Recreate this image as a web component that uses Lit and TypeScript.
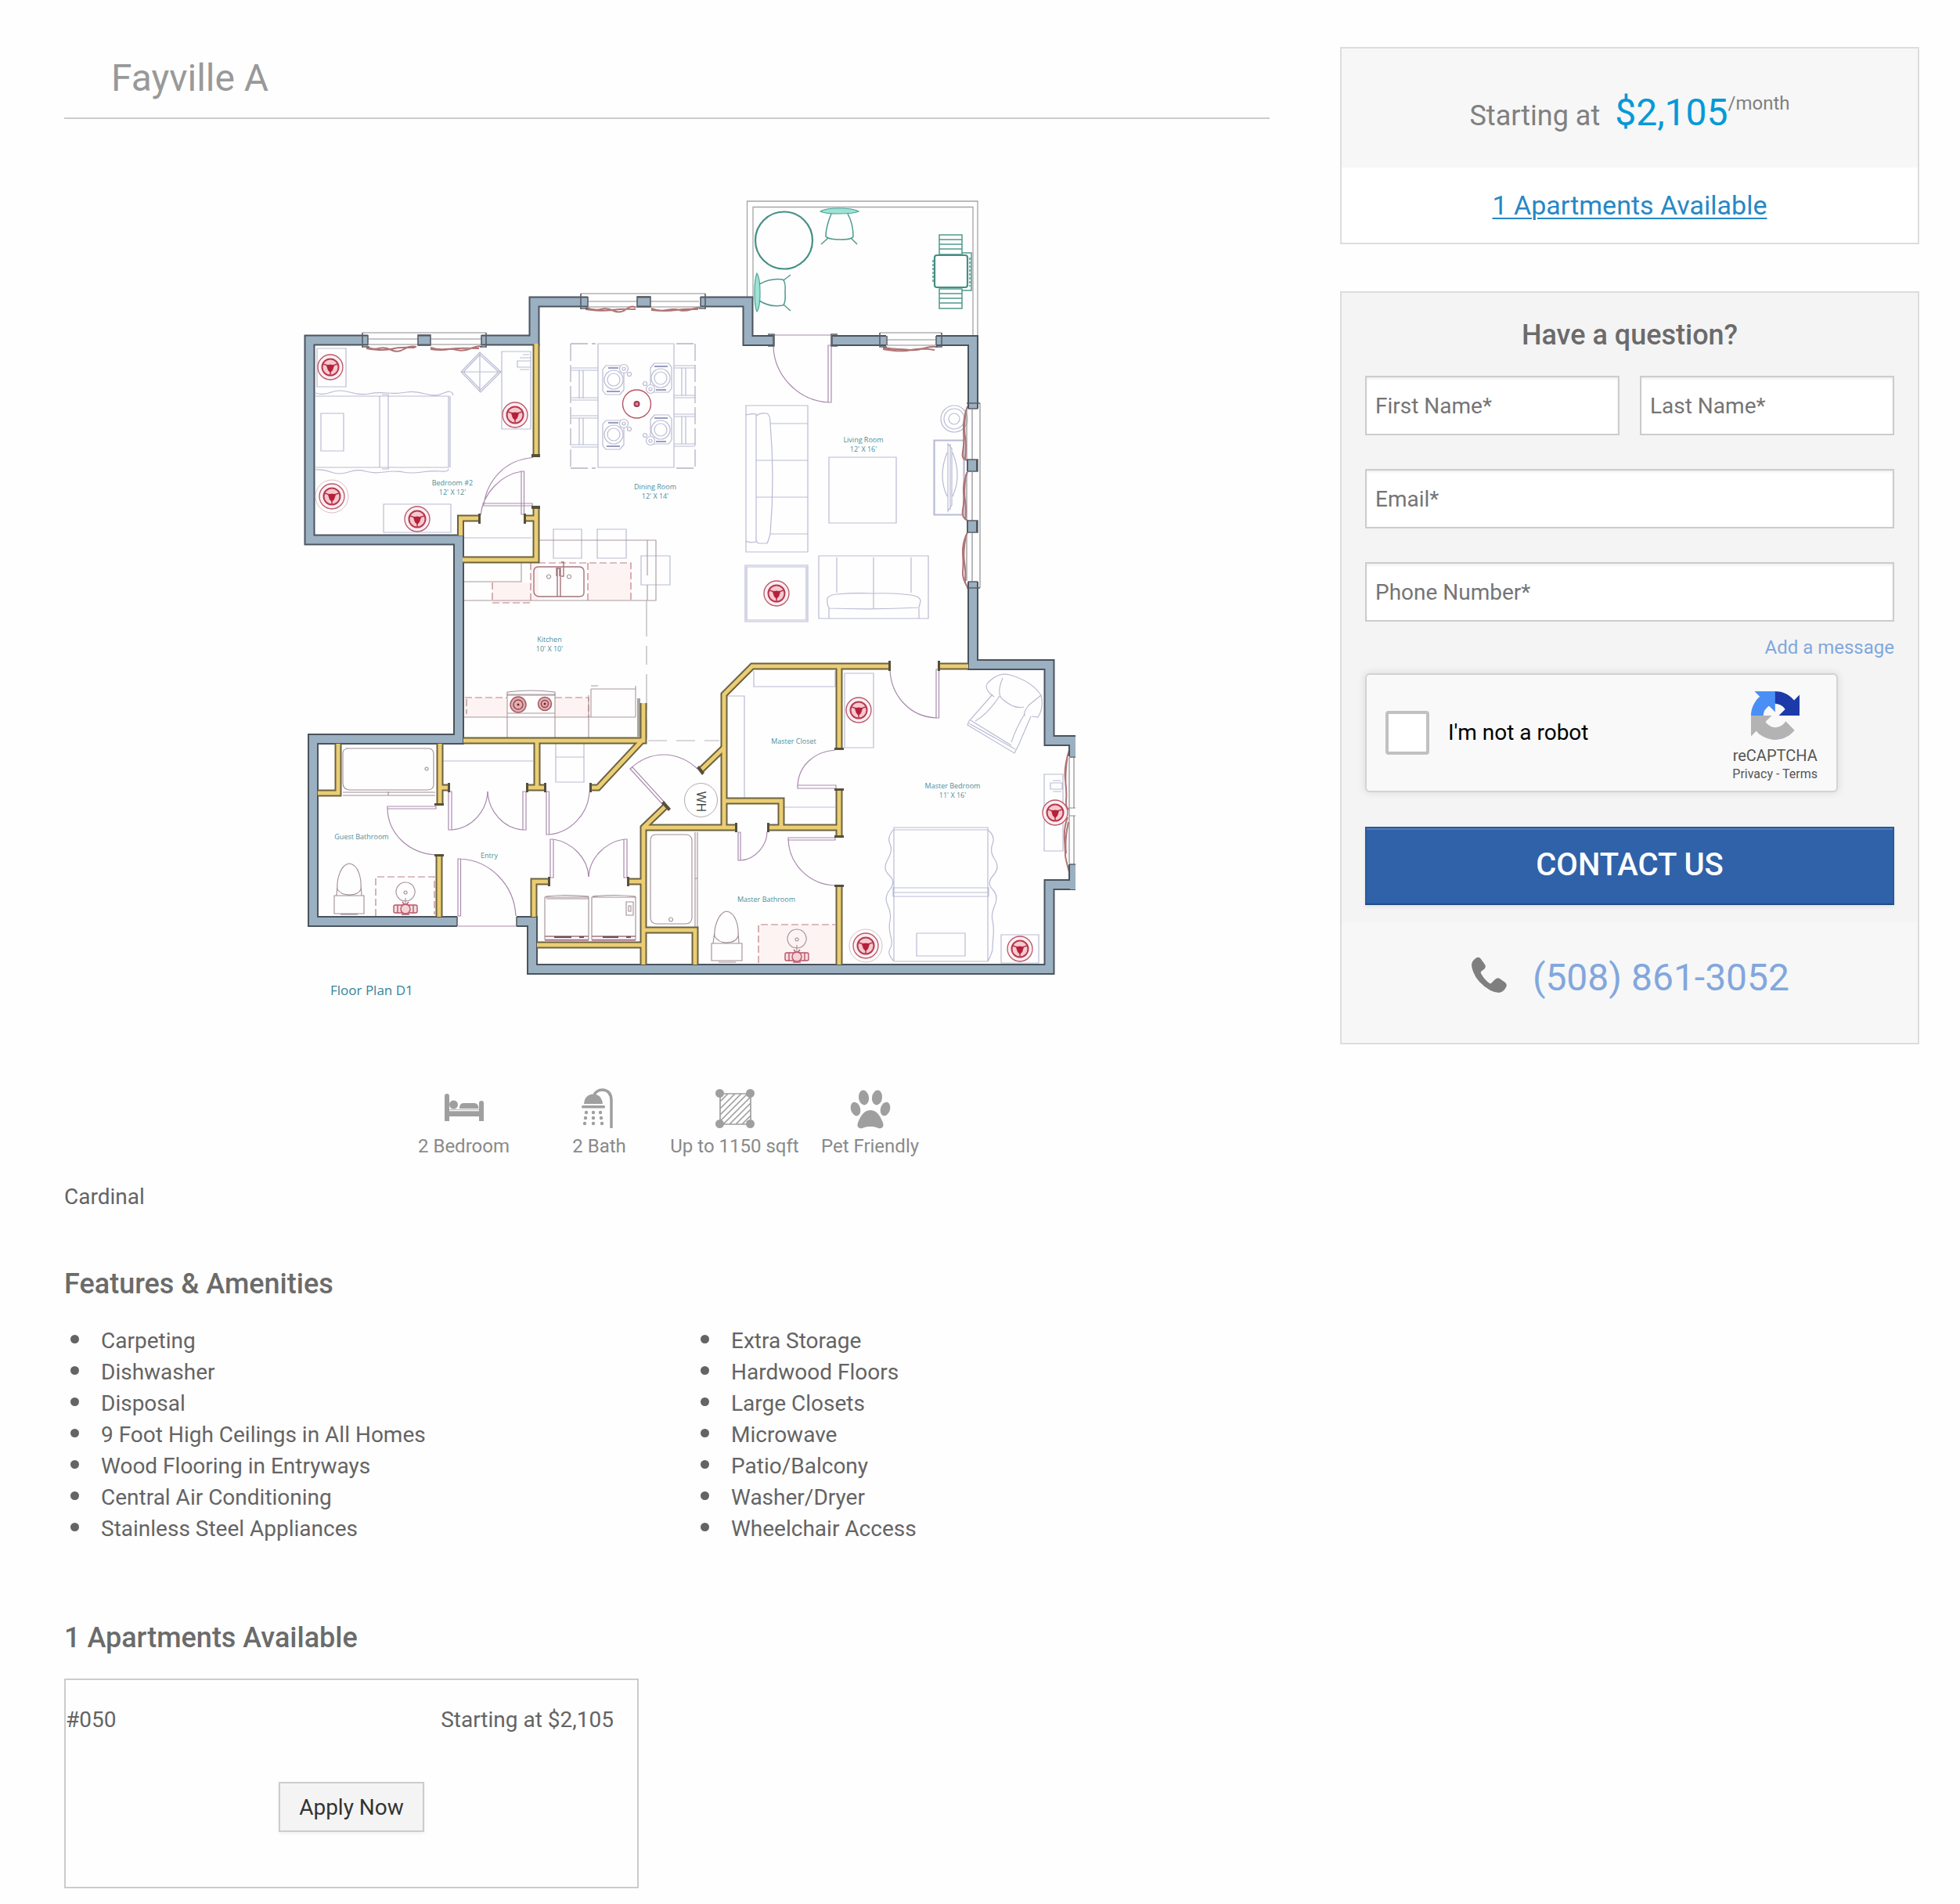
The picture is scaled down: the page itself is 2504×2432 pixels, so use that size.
import { LitElement, html, svg, css } from "lit";
import { customElement, property } from "lit/decorators.js";

type Pt = [number, number];

/* ---------- Floor plan data (plan units) ---------- */

const OUTER_WALLS = [
  "M470 434.5H395.5V689.5H586V944H400V1177H584",
  "M660 1177H680V1238H1340.500V1130H1380",
  "M1380 946H1340.500V849H1243V743",
  "M1243 522V435H1196",
  "M1063 435H1132",
  "M988 435H955.500V385.500H895",
  "M751 385.500H682.500V434.500H615",
  "M534 434.500H550",
  "M814 385.500H831",
  "M1242 587V602",
  "M1242 665V680",
  "M1372 946V966",
  "M1372 1104V1136",
];

const INNER_WALLS = [
  "M685 439V584",
  "M685 647V715H591",
  "M670 662H685",
  "M613 662H588.500V684",
  "M592 946H822V898",
  "M822 944L764 1006H754",
  "M686 946V1006",
  "M672 1006H697",
  "M562 950V1028",
  "M562 1006H573",
  "M432 950V1013H406",
  "M561 1092V1171",
  "M702 1126H682V1171",
  "M802 1126H822",
  "M822 1232V1057L850 1030",
  "M822 1057H941",
  "M686 1207H822",
  "M822 1188H888V1232",
  "M925 1057V887L961 851H1137",
  "M896 983L925 955",
  "M1072 851V957",
  "M1199 851H1237",
  "M925 1023H998V1057",
  "M981 1057H1072",
  "M1072 1008V1069",
  "M1072 1131V1232",
];

/* Short dark caps on wall ends: x, y, width, height */
const CAPS: [number, number, number, number][] = [
  [679, 580, 11, 4], [679, 646, 11, 4], [669, 656, 3, 13], [611, 656, 3, 13],
  [572, 1000, 3, 12], [672, 1000, 3, 12], [695, 1000, 3, 12], [753, 1000, 3, 12],
  [555, 1026, 12, 3], [555, 1091, 12, 3], [700, 1120, 3, 12], [801, 1120, 3, 12],
  [1135, 844, 3, 13], [1198, 844, 3, 13], [1066, 955, 12, 3], [1066, 1007, 12, 3],
  [1066, 1067, 12, 3], [1066, 1130, 12, 3], [939, 1051, 3, 12], [980, 1051, 3, 12],
];

const DOORS = [
  "M681 584.500C645 587 622 614 618 645M617 643H680V646H617zM666 602H669.500V657H666zM667 602C640 606 617 630 614 658",
  "M988 428H1063M1058 441H1062V514H1058zM988 442C989 480 1020 512 1059 514",
  "M1196 855H1199.500V917H1196zM1137 855C1138 888 1162 916 1197 917",
  "M1019 1003H1068V1007H1019zM1067 958C1040 960 1020 978 1019 1004",
  "M1007 1070H1067V1073H1007zM1007 1072C1008 1104 1034 1130 1067 1131",
  "M943 1063H946V1099H943zM946 1099C965 1098 980 1080 980 1062",
  "M573 1011H577V1060H573zM577 1060C603 1058 622 1036 623 1011",
  "M668 1011H672V1060H668zM668 1060C643 1058 624 1036 623 1011",
  "M698 1011H701.500V1066H698zM701 1066C728 1064 752 1040 753 1011",
  "M495 1030H557V1033H495zM495 1033C496 1065 522 1090 557 1092",
  "M585 1097H588.500V1170H585zM588 1097C626 1099 657 1130 659 1170M585 1183H660",
  "M703 1072H707V1121H703zM707 1072C731 1076 751 1096 752 1120",
  "M797 1072H801V1121H797zM797 1072C773 1076 753 1096 752 1120",
  "M805 982L808 980L850 1026L847 1028zM805 982C832 957 866 959 891 982",
];

const WINDOWS = [
  "M463 425H621M471 433H534M551 433H615M471 440H534M551 440H615",
  "M742 375H901M751 385H814M831 385H893M751 392H814M831 392H893",
  "M1124 425H1203M1133 434H1195M1133 441H1195",
  "M1252 515V751M1242 523V587M1242 603V665M1242 681V742M1235 523V587M1235 603V665M1235 681V742",
  "M1366 968V1103M1372 968V1032M1372 1042V1103M1366 1032H1374M1366 1042H1374",
];

const BRACKETS = [
  "M463 425V444M621 425V444M463 443H472M613 443H621",
  "M742 375V395M901 375V395M742 394H752M893 394H901",
  "M1124 425V443H1133M1203 425V443H1195",
  "M1235 515H1252M1235 751H1252",
  "M981 427H989V442H981M1070 427H1062V442H1070",
];

const CURTAINS = [
  "M468 443q8 4 16 2t16 2t16 -1t16 -3M468 445q12 2 20 2t16 -2t26 -1M550 444q10 3 18 2t16 1t18 -2t14 -2M550 446q14 2 24 0t38 -1",
  "M748 393q12 4 20 2t16 2t16 -2t12 -2M748 395q20 3 34 1t30 -1M832 394q10 4 20 2t16 0t16 -1t10 -2M832 396q18 2 32 0t28 -1",
  "M1128 444q14 2 20 2t14 1t18 -2t18 -2M1128 446q24 4 36 1t30 0",
  "M1236 519q-6 16 -5 32t-1 26t6 11M1234 524q-3 24 -1 34t0 28M1236 603q-6 14 -5 26t-1 22t6 14M1234 606q-3 22 -1 34t0 24M1236 680q-7 14 -6 28t0 22t6 20M1234 684q-4 22 -2 34t1 26",
  "M1366 958q-7 22 -5 38t1 26t4 12M1364 964q-4 26 -2 44M1364 1044q-5 12 -4 28t1 20t5 22M1365 1050q-5 22 -3 40",
];

const FURNITURE = [
  // bedroom 2
  "M405 445H442V494H405zM403 506H573V597H403M485 506V597M488 504H496V599H488M575 506V597M410 528H439V576H410zM403 502q10 3 20 -1t24 0t24 2t24 -1t24 -1t24 2t24 -1t12 3M403 600q10 -1 20 3t22 0t22 -1t24 1t24 0t24 0t24 -1t10 -3",
  "M613 450L589 475L614 501L640 475zM613 453L592 475L614 498L637 475zM613 450V501M589 475H640M641 449H678V548H641zM661 461h17v8h-17zM668 453h8M664 457h14M664 472h12",
  "M490 644H576V680H490z",
  // dining room
  "M764 439H861V597H764zM730 470H764M730 473H764M740 473V509M745 473V509M730 508H764M730 511H764M730 531H764M730 534H764M740 534V568M745 534V568M730 568H764M730 571H764",
  "M861 467H888M861 470H888M871 470V505M876 470V505M861 505H888M861 508H888M861 529H888M861 532H888M871 532V567M876 532V567M861 567H888M861 570H888",
  // sofas and tables
  "M953 518H1032V705H953zM953 530Q962 528 966 529V692Q958 694 953 691M966 532Q968 527 980 528Q984 530 984 541Q990 610 984 682Q982 690 980 694H969Q965 692 966 685M984 541H1032M986 588H1032M986 635H1032M984 682H1032M966 588H986M966 635H986",
  "M1059 584H1145V668H1059z",
  "M1046 710H1186V790H1046zM1069 712V757M1116 712V777M1164 712V757M1069 759Q1092 757 1116 758Q1140 757 1164 760Q1176 762 1176 768L1174 776Q1120 779 1060 777Q1056 774 1057 764Q1060 760 1069 759M1059 777V790M1174 777V790",
  "M1193 562H1232V658H1193zM1194 563H1231V657H1194zM1211 567l5 6v72l-5 8zM1214 567v84M1210 578q-12 30 0 56M1217 578q12 30 0 56",
  "M1219 518a17 17 0 1 0 0 34a17 17 0 1 0 0 -34M1219 522a13 13 0 1 0 0 26a13 13 0 1 0 0 -26M1219 528a7 7 0 1 0 0 14a7 7 0 1 0 0 -14",
  // counter stools
  "M707 676H743V713H707zM763 676H800V713H763zM819 710H856V747H819z",
  // closets and shelves
  "M963 857V877H1067V857M928 889H951V1019M1002 1031H1067M1079 860H1116V955H1079zM593 687H679M566 972H681M710 950V999H746V950M710 967H746",
  // armchair
  "M1262 872Q1276 858 1290 862Q1318 870 1330 888Q1334 904 1326 916L1318 915M1262 872Q1256 880 1270 890M1281 866Q1272 888 1282 894Q1296 906 1308 903M1330 888L1314 901Q1306 912 1310 914M1268 887L1238 921L1236 926L1296 962L1302 950L1317 915M1277 889Q1262 912 1246 921M1309 912Q1298 930 1292 948M1240 920L1292 952M1238 924L1297 957",
  // master bed
  "M1142 1057H1262V1060H1142zM1142 1060V1228M1262 1060V1228M1141 1134H1263V1145H1141zM1141 1140H1263M1143 1228H1262M1171 1192H1233V1221H1171zM1141 1060q-8 10 -4 18t-3 20t2 20t1 18t-3 20t3 20t1 20t-1 16t5 16M1262 1060q10 8 6 18t3 20t-2 20t-1 18t3 20t-3 20t1 20t-1 16t-6 16",
  "M1334 989H1358V1087H1334zM1342 1000h15v8h-15zM1345 997h10M1345 1011h11M1279 1194H1327V1230H1279z",
  "M952 722H1032V794H952zM954 724H1030V792H954z",
];

const DASHED_OUTLINE =
  "M729 439V597M888 439V597M729 439H761M864 439H888M729 598H761M864 598H888";

const FIXTURES = [
  "M442 956H548Q554 957 554 963V1003Q553 1009 546 1009H446Q438 1008 438 1000V962Q438 956 446 956M545 980a2 2 0 1 0 .1 0M438 1012H556M438 1016H556M496 1011V1016",
  "M838 1066H877Q884 1067 884 1074V1173Q883 1180 876 1180H838Q831 1179 831 1172V1074Q831 1066 838 1066M857 1172a2.500 2.500 0 1 0 .1 0M888 1063V1184M891 1063V1184M888 1122H891",
  "M446 1103C434 1105 430 1125 431 1136Q436 1143 446 1143Q458 1143 461 1136C462 1122 458 1104 446 1103M427 1144H465V1167H427zM431 1130L430 1144M461 1130L462 1144M435 1168H457",
  "M928 1164C917 1166 912 1186 913 1196Q918 1204 928 1204Q940 1204 943 1196C944 1184 940 1165 928 1164M909 1205H948V1227H909zM913 1190L911 1205M943 1190L944 1205M918 1229H940",
  "M518 1127a12 12 0 1 0 .1 0M518 1138a2 2 0 1 0 .1 0M518 1147V1156",
  "M1018 1187a12 12 0 1 0 .1 0M1018 1198a2 2 0 1 0 .1 0M1018 1207V1216",
  "M696 1146H752V1200H696zM698 1148H752V1196M756 1146H812V1200H756zM697 1145Q720 1142 752 1145M757 1145Q786 1142 812 1145M800 1152H809V1169H800zM803 1157h3v7h-3z",
  "M701 734a2.500 2.500 0 1 0 .1 0M727 734a2.500 2.500 0 1 0 .1 0M648 884Q678 880 709 884V888H648z",
];

const COUNTERS = [
  "M688 690H838V767H592M827 690V735M827 747V767M592 743H666V719M648 896V942M709 888V942M752 888V942M755 880V916M812 876V916M755 880H812M755 876H764M592 916H812M648 887H709V911H648z",
];

const LAMPS: { at: Pt; wide?: boolean }[] = [
  { at: [422, 469] }, { at: [658, 530] }, { at: [424, 634], wide: true }, { at: [533, 663] },
  { at: [992, 758] }, { at: [1097, 907] }, { at: [1348, 1038] },
  { at: [1106, 1208], wide: true }, { at: [1303, 1212] },
];

const PLACE_SETTINGS: { at: Pt; flip: number }[] = [
  { at: [784, 485], flip: 1 }, { at: [844, 483], flip: -1 },
  { at: [784, 555], flip: 1 }, { at: [844, 549], flip: -1 },
];

const ROOMS: { at: Pt; lines: string[] }[] = [
  { at: [578, 620], lines: ["Bedroom #2", "12' X 12'"] },
  { at: [837, 625], lines: ["Dining Room", "12' X 14'"] },
  { at: [1103, 565], lines: ["Living Room", "12' X 16'"] },
  { at: [702, 820], lines: ["Kitchen", "10' X 10'"] },
  { at: [1014, 950], lines: ["Master Closet"] },
  { at: [1217, 1007], lines: ["Master Bedroom", "11' X 16'"] },
  { at: [462, 1072], lines: ["Guest Bathroom"] },
  { at: [625, 1096], lines: ["Entry"] },
  { at: [979, 1152], lines: ["Master Bathroom"] },
];

@customElement("floor-plan")
export class FloorPlan extends LitElement {
  static styles = css`
    :host { display: block; }
    .plan { display: block; width: 100%; height: auto; fill: none; }
    .wall-edge { stroke: #4a545e; stroke-width: 14; }
    .wall-fill { stroke: #9bb0c1; stroke-width: 10; }
    .inner-edge { stroke: #6b6340; stroke-width: 9; }
    .inner-fill { stroke: #ebcd74; stroke-width: 5; }
    .cap { fill: #55503c; }
    .door { stroke: #a98aae; stroke-width: 1.2; }
    .window { stroke: #8c8c90; stroke-width: 1.2; }
    .bracket { stroke: #5a5e64; stroke-width: 1.6; }
    .curtain { stroke: #b07476; stroke-width: 2; }
    .furniture { stroke: #b9bbd3; stroke-width: 1.2; }
    .cutlery { stroke: #989dbf; stroke-width: 2; }
    .dashed { stroke: #b3b3c4; stroke-width: 1.3; stroke-dasharray: 22 5; }
    .fixture { stroke: #a08c96; stroke-width: 1.1; }
    .counter { stroke: #a8979c; stroke-width: 1.1; }
    .shade { fill: #fef3f3; }
    .red-dash { stroke: #bb7f86; stroke-width: 1.2; stroke-dasharray: 9 4; }
    .sink { stroke: #a5737b; stroke-width: 1.4; }
    .red { stroke: #b8566a; stroke-width: 1.4; }
    .patio { stroke: #4f9a8e; stroke-width: 1.5; }
    .patio-table { stroke: #458f84; stroke-width: 2.2; }
    .patio-seat { stroke: #4aa596; stroke-width: 1.2; fill: #9fe3d6; }
    .railing { stroke: #a9a4a6; stroke-width: 1.3; }
    .room { fill: #4d8f9c; font: 9px "Open Sans", "Noto Sans", sans-serif; text-anchor: middle; }
    .caption { fill: #37849a; font: 500 17px "Open Sans", "Noto Sans", sans-serif; }
    .heater { fill: #444; font: 16px "Open Sans", sans-serif; text-anchor: middle; }
  `;

  private lamp({ at: [x, y], wide }: { at: Pt; wide?: boolean }) {
    return svg`
      <g transform="translate(${x} ${y})">
        ${wide ? svg`<circle r="21" stroke="#cfaeb6" stroke-width="0.8"></circle>` : ""}
        <circle r="16" fill="#fdeef0" stroke="#b9566a" stroke-width="1.3"></circle>
        <circle r="10.500" fill="#f6c9cf" stroke="#b53a50" stroke-width="2"></circle>
        <path d="M-9 -4Q0 0 9 -4M0 0V10" stroke="#b5394f" stroke-width="1.5"></path>
        <path d="M-5 -2Q0 -5 5 -2L3 4L0 7L-3 4z" fill="#b5213a"></path>
      </g>`;
  }

  private setting({ at: [x, y], flip }: { at: Pt; flip: number }) {
    return svg`
      <g transform="translate(${x} ${y}) scale(${flip})" class="furniture">
        <path d="M-10 -18H9L13 -13V13L8 19H-10L-14 14V-13z"></path>
        <path class="cutlery" d="M-9 15H8M-7 -15H6"></path>
        <circle r="12" fill="#fff"></circle>
        <circle r="8"></circle>
        <circle cx="13" cy="-14" r="5.500" fill="#fff"></circle>
        <circle cx="13" cy="-14" r="2"></circle>
        <circle cx="20" cy="-7" r="2.500"></circle>
      </g>`;
  }

  private burner(x: number, y: number, r: number) {
    return svg`
      <circle cx=${x} cy=${y} r=${r} fill="#dfb0b3" stroke="#a8585f" stroke-width="1.500"></circle>
      <circle cx=${x} cy=${y} r=${r - 4} stroke="#9c444d" stroke-width="1.500"></circle>
      <circle cx=${x} cy=${y} r="1.500" fill="#7a1f2a"></circle>`;
  }

  render() {
    const paths = (list: string[], cls: string) =>
      list.map((d) => svg`<path class=${cls} d=${d}></path>`);
    return html`
      <svg class="plan" viewBox="330 190 1044 1140" role="img" aria-label="Floor Plan D1">
        <path class="shade" d="M629 744H678V770H629zM678 719H688V767H678zM751 719H806V767H751zM594 891H648V916H594zM709 891H752V916H709zM969 1181H1067V1230H969z"></path>

        <path class="railing" d="M954.500 379V257H1249V429M962 379V264.500H1243V429"></path>
        <circle class="patio-table" cx="1001.500" cy="307" r="36.500"></circle>
        <path class="patio-seat" d="M1048 270q6 -4 24 -4t25 4q-6 3 -25 3t-24 -3z"></path>
        <path class="patio" d="M1062 273Q1055 290 1055 302Q1058 306 1074 306Q1089 306 1090 302Q1090 286 1083 273M1058 304L1049 312M1087 304L1095 312"></path>
        <path class="patio-seat" d="M967 349q4 6 4 25t-4 24q-3 -6 -3 -24t3 -25z"></path>
        <path class="patio" d="M970 363Q985 355 1000 357Q1004 360 1003 373Q1004 388 1000 390Q984 393 970 384M1001 358L1010 351M1001 389L1010 397"></path>
        <path class="patio" d="M1200 300H1229V325H1200zM1200 306H1229M1200 312H1229M1200 318H1229M1200 369H1229V394H1200zM1200 375H1229M1200 381H1229M1200 387H1229M1229 323H1241V371H1229"></path>
        <rect class="patio-table" x="1194" y="326" width="42" height="41" rx="3" fill="#fff"></rect>
        <path class="patio" d="M1192 332V362M1239 329V366" stroke-dasharray="3 2"></path>

        ${paths(FURNITURE, "furniture")}
        <path class="dashed" d=${DASHED_OUTLINE}></path>
        ${PLACE_SETTINGS.map((s) => this.setting(s))}
        <circle class="red" cx="813.500" cy="516" r="18"></circle>
        <circle cx="813.500" cy="516" r="3" fill="#e08a94" stroke="#a3384c" stroke-width="2"></circle>

        ${paths(COUNTERS, "counter")}
        ${paths(FIXTURES, "fixture")}
        <path class="red-dash" d="M629 744V770H678V719M688 719H806V767M751 719V767M594 891H648M709 891H752V916M596 893V912M480 1170V1120H555V1168M969 1230V1181H1067"></path>
        <path class="sink" d="M688 724H741Q746 725 746 730V757Q746 762 740 762H688Q682 761 682 755V730Q682 724 688 724M712 725V762M716 725V762M711 736v-10h4v10M717 718h3v18h-3"></path>
        ${this.burner(662, 900, 10)} ${this.burner(696, 899, 8.5)}
        <path class="sink" d="M696 1196H752M756 1196H812M696 1201H752M756 1201H812"></path>
        <path d="M708 1197H730M740 1197H746M770 1197H790M800 1197H806" stroke="#6c4a52" stroke-width="2"></path>
        <g class="red">
          <rect x="503" y="1156" width="30" height="10" rx="2" fill="#f6dcdf"></rect>
          <circle cx="518" cy="1161" r="6" fill="#f6d3d7"></circle>
          <path d="M508 1156v10M528 1156v10M513 1168h10M514 1152l3 4M522 1152l-3 4"></path>
          <rect x="1003" y="1217" width="30" height="10" rx="2" fill="#f6dcdf"></rect>
          <circle cx="1018" cy="1222" r="6" fill="#f6d3d7"></circle>
          <path d="M1008 1217v10M1028 1217v10M1013 1229h10M1014 1213l3 4M1022 1213l-3 4"></path>
        </g>
        <path d="M826 767V944" stroke="#b5b2b6" stroke-width="1.2" stroke-dasharray="46 12 24 12"></path>
        <path d="M828 946H919" stroke="#b5b2b6" stroke-width="1.2" stroke-dasharray="24 12"></path>
        <path d="M816 892V941" stroke="#a9a5a0" stroke-width="4"></path>

        ${paths(WINDOWS, "window")}
        ${paths(CURTAINS, "curtain")}
        ${paths(DOORS, "door")}
        ${paths(OUTER_WALLS, "wall-edge")}
        ${paths(INNER_WALLS, "inner-edge")}
        ${paths(OUTER_WALLS, "wall-fill")}
        ${paths(INNER_WALLS, "inner-fill")}
        ${paths(BRACKETS, "bracket")}
        ${CAPS.map(([x, y, w, h]) => svg`<rect class="cap" x=${x} y=${y} width=${w} height=${h}></rect>`)}
        <path class="cap" d="M845 1026l3 -3l9 10l-3 3zM890 981l3 -3l7 9l-3 3z"></path>
        <path class="bracket" d="M470 428V441M615 428V441M534 428V441H550V428zM751 379V392M895 379V392M814 379V392H831V379zM1133 429V441M1196 429V441M1063 429V441M988 429V441M1237 522H1249M1236 587H1249V602H1236zM1236 665H1249V680H1236zM1237 743H1249M584 1171V1183M660 1171V1183M1366 967H1374M1366 1104H1374"></path>

        ${LAMPS.map((l) => this.lamp(l))}

        <ellipse cx="895.500" cy="1022" rx="21" ry="21.500" stroke="#b5a6ad" fill="#fff"></ellipse>
        <text class="heater" transform="translate(890 1024) rotate(90)">WH</text>
        ${ROOMS.map(({ at: [x, y], lines }) =>
          lines.map((t, i) => svg`<text class="room" x=${x} y=${y + i * 12}>${t}</text>`))}
        <text class="caption" x="422" y="1271">Floor Plan D1</text>
      </svg>`;
  }
}

/* ---------- Feature icons ---------- */

const ICONS = {
  bed: svg`
    <path d="M1 10a3 3 0 0 1 6 0V27H45V19a3 3 0 0 1 6 0V42H45V36H7V42H1z"></path>
    <circle cx="12.500" cy="21" r="5.500"></circle>
    <path d="M20 26q0 -7 5 -7H39q5 0 5.500 7z"></path>
    <path d="M7 28.500H45" stroke="#fefefe" stroke-width="1.500"></path>`,
  shower: svg`
    <path d="M19 8Q23 2 30 2Q41 3 41 16V51" fill="none" stroke="#9f9f9f" stroke-width="3.500"></path>
    <path d="M6 20Q7 8 18 7.500Q29 8 30 20z"></path>
    <rect x="3" y="22" width="30" height="3.500" rx="1.500"></rect>
    <circle cx="9" cy="31" r="2.200"></circle><circle cx="18" cy="31" r="2.200"></circle><circle cx="27" cy="31" r="2.200"></circle>
    <circle cx="8" cy="38" r="2.200"></circle><circle cx="18" cy="38" r="2.200"></circle><circle cx="28" cy="38" r="2.200"></circle>
    <circle cx="7" cy="45" r="2.200"></circle><circle cx="18" cy="45" r="2.200"></circle><circle cx="29" cy="45" r="2.200"></circle>`,
  area: svg`
    <path d="M7 7H46V46H7zM7 17L17 7M7 26L26 7M7 34L34 7M7 42L42 7M11 46L46 11M19 46L46 19M27 46L46 27M35 46L46 35" fill="none" stroke="#9f9f9f" stroke-width="1.700"></path>
    <circle cx="6.500" cy="6.500" r="5.500"></circle><circle cx="45.500" cy="6.500" r="5.500"></circle>
    <circle cx="6.500" cy="45.500" r="5.500"></circle><circle cx="45.500" cy="45.500" r="5.500"></circle>`,
  paw: svg`
    <ellipse cx="17.500" cy="12" rx="6.500" ry="9.500" transform="rotate(-8 17.500 12)"></ellipse>
    <ellipse cx="34.500" cy="12" rx="6.500" ry="9.500" transform="rotate(8 34.500 12)"></ellipse>
    <ellipse cx="7" cy="26.500" rx="6" ry="9" transform="rotate(-16 7 26.500)"></ellipse>
    <ellipse cx="45" cy="26.500" rx="6" ry="9" transform="rotate(16 45 26.500)"></ellipse>
    <path d="M26 28C35 28 39 37 42 44C44 50 40 52 36 51C31 49 29 49 26 49C23 49 21 49 16 51C12 52 8 50 10 44C13 37 17 28 26 28z"></path>`,
};

const FACTS: { icon: keyof typeof ICONS; label: string }[] = [
  { icon: "bed", label: "2 Bedroom" },
  { icon: "shower", label: "2 Bath" },
  { icon: "area", label: "Up to 1150 sqft" },
  { icon: "paw", label: "Pet Friendly" },
];

const AMENITIES = [
  ["Carpeting", "Dishwasher", "Disposal", "9 Foot High Ceilings in All Homes",
    "Wood Flooring in Entryways", "Central Air Conditioning", "Stainless Steel Appliances"],
  ["Extra Storage", "Hardwood Floors", "Large Closets", "Microwave",
    "Patio/Balcony", "Washer/Dryer", "Wheelchair Access"],
];

/* ---------- Contact form ---------- */

@customElement("contact-card")
export class ContactCard extends LitElement {
  @property() phone = "";

  static styles = css`
    :host { display: block; border: 2px solid #ddd; background: #f7f7f7; }
    * { box-sizing: border-box; }
    .form { background: #f4f4f4; padding: 30px 30px 22px; }
    .title { margin: 0 0 28px; font-size: 36px; line-height: 48px; font-weight: 500; color: #6b6b6b; text-align: center; }
    .fields { display: grid; grid-template-columns: 1fr 1fr; column-gap: 26px; row-gap: 43px; }
    .wide { grid-column: 1 / -1; }
    .input {
      width: 100%; min-width: 0; height: 76px; padding: 0 11px; border: 2px solid #ccc; border-radius: 0;
      background: #fff; box-shadow: inset 0 2px 3px rgba(0, 0, 0, 0.07);
      font: 28px Roboto, sans-serif; color: #444; outline: none;
    }
    .input::placeholder { color: #757575; opacity: 1; }
    .more { display: flex; justify-content: flex-end; margin: 16px 0; font-size: 24px; line-height: 34px; }
    .link { color: #82a7dd; text-decoration: none; }
    .captcha {
      display: flex; justify-content: space-between; align-items: center; max-width: 604px; height: 152px;
      padding: 0 24px; border: 2px solid #d3d3d3; border-radius: 6px; background: #f9f9f9;
      box-shadow: 0 0 8px 2px rgba(0, 0, 0, 0.08);
    }
    .robot { display: flex; align-items: center; gap: 24px; font-size: 28px; line-height: 56px; color: #000; }
    .box { appearance: none; width: 56px; height: 56px; margin: 0; border: 4px solid #c1c1c1; border-radius: 4px; background: #fff; }
    .brand { display: flex; flex-direction: column; align-items: center; padding-top: 12px; color: #555; font-size: 20px; line-height: 24px; }
    .mark { width: 62px; height: 62px; margin-bottom: 8px; }
    .legal { font-size: 16px; line-height: 24px; }
    .legal a { color: inherit; text-decoration: none; }
    .submit {
      display: block; width: 100%; height: 100px; margin-top: 44px; padding: 0 0 3px; border: 2px solid #2a599c; border-bottom-color: #1f4a86;
      background: #3062a9; color: #fff; font: 500 40px Roboto, sans-serif;
      box-shadow: inset 0 2px 0 #4f7dbb, 0 2px 4px rgba(0, 0, 0, 0.08);
    }
    .call { display: flex; justify-content: center; align-items: flex-start; gap: 32px; padding: 43px 0 55px; font-size: 48px; line-height: 56px; }
    .handset { width: 48px; height: 48px; fill: #7f7f7f; }
  `;

  render() {
    return html`
      <form class="form" @submit=${(e: Event) => e.preventDefault()}>
        <h2 class="title">Have a question?</h2>
        <div class="fields">
          <input class="input" name="first" placeholder="First Name*" aria-label="First Name" />
          <input class="input" name="last" placeholder="Last Name*" aria-label="Last Name" />
          <input class="input wide" type="email" name="email" placeholder="Email*" aria-label="Email" />
          <input class="input wide" type="tel" name="phone" placeholder="Phone Number*" aria-label="Phone Number" />
        </div>
        <div class="more"><a class="link" href="#message">Add a message</a></div>
        <div class="captcha">
          <label class="robot"><input class="box" type="checkbox" />I'm not a robot</label>
          <div class="brand">
            <svg class="mark" viewBox="0 0 64 64" aria-hidden="true">
              <path fill="#1c3aa9" d="M64 31.955l-.033-1.37V4.687l-7.16 7.160C50.948 4.674 42.033.093 32.050.093c-10.400 0-19.622 4.960-25.458 12.640l11.736 11.860a15.550 15.550 0 0 1 4.754-5.334c2.050-1.600 4.952-2.906 8.968-2.906.485 0 .860.057 1.135.163 4.976.393 9.288 3.140 11.828 7.124l-8.307 8.307L64 31.953"></path>
              <path fill="#4a8ff5" d="M31.862.094l-1.370.033H4.594l7.160 7.160C4.580 13.147 0 22.060 0 32.046c0 10.400 4.960 19.622 12.640 25.458L24.500 45.768a15.550 15.550 0 0 1-5.334-4.754c-1.600-2.050-2.906-4.952-2.906-8.968 0-.485.057-.860.163-1.135.393-4.976 3.140-9.288 7.124-11.828l8.307 8.307L31.860.095"></path>
              <path fill="#b3b3b3" d="M.001 32.045l.033 1.370v25.898l7.160-7.160c5.860 7.173 14.774 11.754 24.760 11.754 10.400 0 19.622-4.960 25.458-12.640l-11.736-11.860a15.550 15.550 0 0 1-4.754 5.334c-2.050 1.600-4.952 2.906-8.968 2.906-.485 0-.860-.057-1.135-.163-4.976-.393-9.288-3.140-11.828-7.124l8.307-8.307c-10.522.040-22.400.066-27.295-.005"></path>
            </svg>
            <span>reCAPTCHA</span>
            <span class="legal"><a href="#privacy">Privacy</a> - <a href="#terms">Terms</a></span>
          </div>
        </div>
        <button class="submit" type="submit">CONTACT US</button>
      </form>
      <div class="call">
        <svg class="handset" viewBox="0 0 48 48" aria-hidden="true">
          <path d="M2 11Q3 5 9 2Q12 1 14 4L19 11Q21 14 18 17L14 20Q13 22 15 24Q19 31 25 35Q27 36 28 34L32 30Q35 27 38 29L45 34Q48 37 46 40Q43 46 37 47Q32 47 26 44Q9 34 4 20Q2 15 2 11z"></path>
        </svg>
        <a class="link" href="tel:5088613052">${this.phone}</a>
      </div>`;
  }
}

/* ---------- Page ---------- */

@customElement("app-root")
export class AppRoot extends LitElement {
  static styles = css`
    :host { display: block; min-height: 100vh; background: #fefefe; color: #646464; font: 28px/40px Roboto, sans-serif; box-sizing: border-box; }
    * { box-sizing: border-box; }
    .page { display: grid; grid-template-columns: minmax(0, 1540fr) minmax(0, 740fr); column-gap: 90px; align-items: start; padding: 60px 52px 20px 82px; }
    .name { margin: 0; padding: 10px 60px 20px; border-bottom: 2px solid #ccc; font-size: 48px; line-height: 60px; font-weight: 400; color: #999; }
    .figure { width: 100%; max-width: 1044px; margin: 38px auto 60px; }
    .facts { display: flex; justify-content: center; margin: 0; padding: 0; list-style: none; font-size: 24px; line-height: 32px; color: #8a8a8a; }
    .fact { display: flex; flex-direction: column; align-items: center; gap: 6px; width: 173px; white-space: nowrap; }
    .glyph { width: 52px; height: 52px; fill: #9f9f9f; }
    .summary { margin: 29px 0 67px; }
    .heading { margin: 0 0 28px; font-size: 36px; line-height: 48px; font-weight: 500; color: #6b6b6b; }
    .amenities { display: grid; grid-template-columns: 805fr 735fr; margin-bottom: 95px; padding-top: 1px; }
    .list { margin: 0; padding: 0; list-style: none; }
    .item { display: flex; align-items: center; gap: 28px; padding-left: 8px; }
    .item::before { content: ""; width: 11px; height: 11px; margin-bottom: 6px; border-radius: 50%; background: #646464; }
    .unit { width: 48%; max-width: 734px; padding: 31px 0 70px; border: 2px solid #ccc; }
    .unit-row { display: flex; justify-content: space-between; margin-bottom: 59px; padding-right: 30px; }
    .apply { display: block; height: 64px; margin: 0 auto; padding: 0 24px; border: 2px solid #ccc; background: #f4f4f4; color: #333; font: 28px Roboto, sans-serif; box-shadow: 0 2px 4px rgba(0, 0, 0, 0.06); }
    .side { display: grid; row-gap: 60px; }
    .price-card { border: 2px solid #ddd; background: #fff; }
    .price { display: flex; justify-content: center; align-items: baseline; height: 152px; padding-top: 52px; background: #f7f7f7; font-size: 36px; line-height: 60px; color: #808080; }
    .amount { margin-left: 19px; font-size: 48px; color: #0599d8; }
    .per { align-self: flex-start; font-size: 24px; line-height: 36px; }
    .available { display: flex; justify-content: center; padding: 24px 0; font-size: 34px; line-height: 48px; }
    .available-link { color: #2787c5; text-decoration: underline; text-decoration-thickness: 2px; text-underline-offset: 4px; }
  `;

  render() {
    return html`
      <div class="page">
        <main>
          <h1 class="name">Fayville A</h1>
          <floor-plan class="figure"></floor-plan>
          <ul class="facts">
            ${FACTS.map((f) => html`
              <li class="fact">
                <svg class="glyph" viewBox="0 0 52 52" aria-hidden="true">${ICONS[f.icon]}</svg>
                <span>${f.label}</span>
              </li>`)}
          </ul>
          <p class="summary">Cardinal</p>
          <h2 class="heading">Features &amp; Amenities</h2>
          <div class="amenities">
            ${AMENITIES.map((col) => html`
              <ul class="list">${col.map((a) => html`<li class="item">${a}</li>`)}</ul>`)}
          </div>
          <h2 class="heading" id="units">1 Apartments Available</h2>
          <section class="unit">
            <div class="unit-row"><span>#050</span><span>Starting at $2,105</span></div>
            <button class="apply" type="button">Apply Now</button>
          </section>
        </main>
        <aside class="side">
          <section class="price-card">
            <div class="price">
              <span>Starting at</span><span class="amount">$2,105</span><span class="per">/month</span>
            </div>
            <div class="available"><a class="available-link" href="#units">1 Apartments Available</a></div>
          </section>
          <contact-card phone="(508) 861-3052"></contact-card>
        </aside>
      </div>`;
  }
}
